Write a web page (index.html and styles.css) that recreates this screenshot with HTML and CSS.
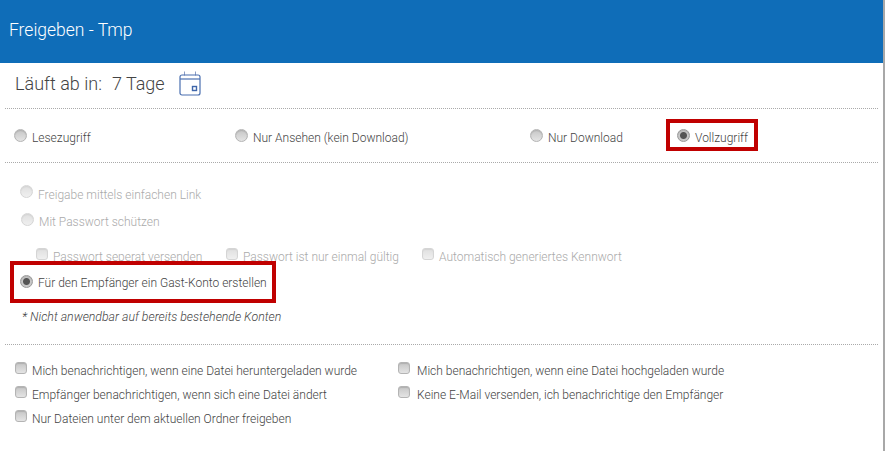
FILE: index.html
```html
<!DOCTYPE html>
<html lang="de">
<head>
    <meta charset="UTF-8">
    <title>Freigeben - Tmp</title>
    <link rel="stylesheet" href="styles.css">
</head>
<body>
    <div class="dialog">
        <div class="dialog-header">Freigeben - Tmp</div>

        <div class="expires">
            <span class="expires-label">Läuft ab in:</span>
            <span>7 Tage</span>
            <svg class="calendar-icon" width="22" height="25" viewBox="0 0 22 25" fill="none">
                <path d="M5.5 0.5V4.5M16.5 0.5V4.5" stroke="#8a9cc4"/>
                <rect x="1" y="4" width="20" height="20" rx="2" stroke="#4a6fb0" stroke-width="1.2"/>
                <path d="M1 8H21" stroke="#4a6fb0" stroke-width="1.2"/>
                <rect x="13.5" y="15.5" width="4" height="4" stroke="#3f66aa" stroke-width="1.4"/>
            </svg>
        </div>

        <div class="access-row">
            <label class="opt"><input type="radio" name="access">Lesezugriff</label>
            <label class="opt"><input type="radio" name="access">Nur Ansehen (kein Download)</label>
            <label class="opt"><input type="radio" name="access">Nur Download</label>
            <label class="opt"><input type="radio" name="access" checked>Vollzugriff</label>
        </div>

        <div class="link-section">
            <label class="opt disabled link-opt"><input type="radio" name="link" disabled>Freigabe mittels einfachen Link</label>
            <label class="opt disabled password-opt"><input type="radio" name="link" disabled>Mit Passwort schützen</label>
            <div class="password-row">
                <label class="opt disabled"><input type="checkbox" disabled>Passwort seperat versenden</label>
                <label class="opt disabled"><input type="checkbox" disabled>Passwort ist nur einmal gültig</label>
                <label class="opt disabled"><input type="checkbox" disabled>Automatisch generiertes Kennwort</label>
            </div>
            <label class="opt guest-opt"><input type="radio" name="link" checked>Für den Empfänger ein Gast-Konto erstellen</label>
            <p class="note">* Nicht anwendbar auf bereits bestehende Konten</p>
        </div>

        <div class="notify-grid">
            <label class="opt"><input type="checkbox">Mich benachrichtigen, wenn eine Datei heruntergeladen wurde</label>
            <label class="opt"><input type="checkbox">Mich benachrichtigen, wenn eine Datei hochgeladen wurde</label>
            <label class="opt"><input type="checkbox">Empfänger benachrichtigen, wenn sich eine Datei ändert</label>
            <label class="opt"><input type="checkbox">Keine E-Mail versenden, ich benachrichtige den Empfänger</label>
            <label class="opt"><input type="checkbox">Nur Dateien unter dem aktuellen Ordner freigeben</label>
        </div>

        <div class="highlight highlight-access"></div>
        <div class="highlight highlight-guest"></div>
    </div>
</body>
</html>
```

FILE: styles.css
```css
body {
    font-family: Roboto, Arial, sans-serif;
    margin: 0;
    background-color: #fff;
    color: #444;
    font-size: 12px;
    font-weight: 300;
    overflow: hidden;
}

.dialog {
    position: relative;
    height: 451px;
    box-sizing: border-box;
    border-right: 2px solid #a8a8a8;
}

.dialog-header {
    height: 63px;
    box-sizing: border-box;
    padding: 18px 0 0 9px;
    background-color: #0f6db8;
    color: #fff;
    font-size: 17.5px;
    line-height: 24px;
}

.expires {
    display: flex;
    align-items: center;
    height: 41px;
    margin: 0 5px;
    padding: 0 0 4px 10px;
    border-bottom: 1px dotted #aaa;
    font-size: 18px;
}

.expires-label {
    margin-right: 10px;
}

.calendar-icon {
    margin-left: 14px;
}

.opt {
    display: flex;
    align-items: flex-start;
    line-height: 16px;
    white-space: nowrap;
}

.opt input {
    appearance: none;
    flex: none;
    width: 13px;
    height: 13px;
    margin: -1px 5px 0 0;
    border: 1px solid #b4b4b4;
    background: linear-gradient(#c6c6c6, #e4e4e4);
    box-shadow: inset 0 1px 1px rgba(0, 0, 0, 0.12);
}

.opt input[type="radio"] {
    border-radius: 50%;
}

.opt input[type="checkbox"] {
    width: 12px;
    height: 12px;
    border-radius: 3px;
}

.opt input:checked {
    background: radial-gradient(circle, #555 0 3px, #c8c8c8 4px);
    border-color: #999;
}

.opt.disabled {
    color: #aaa;
}

.opt.disabled input {
    opacity: 0.55;
}

.access-row {
    display: grid;
    grid-template-columns: 221px 295px 147px 1fr;
    height: 54px;
    margin: 0 5px;
    padding: 21px 0 0 9px;
    box-sizing: border-box;
    border-bottom: 1px dotted #aaa;
}

.link-section {
    height: 182px;
    margin: 0 5px;
    padding-left: 15px;
    box-sizing: border-box;
    border-bottom: 1px dotted #aaa;
}

.link-opt {
    padding-top: 24px;
}

.link-opt input {
    margin-top: -2px;
}

.password-opt {
    margin: 11px 0 0 1px;
}

.password-row {
    display: grid;
    grid-template-columns: 190px 196px 1fr;
    margin: 19px 0 0 16px;
}

.guest-opt {
    margin-top: 10px;
}

.guest-opt input {
    margin-top: 0;
}

.note {
    margin: 18px 0 0 2px;
    font-size: 12.3px;
    font-style: italic;
    line-height: 16px;
}

.notify-grid {
    display: grid;
    grid-template-columns: 383px 1fr;
    grid-auto-rows: 24px;
    margin: 0 5px;
    padding: 18px 0 0 10px;
}

.notify-grid .opt:nth-child(even) input {
    margin-right: 7px;
}

.highlight {
    position: absolute;
    box-sizing: border-box;
    border: 4px solid #c00000;
}

.highlight-access {
    left: 666px;
    top: 119px;
    width: 92px;
    height: 32px;
}

.highlight-guest {
    left: 10px;
    top: 261px;
    width: 266px;
    height: 42px;
}
```
